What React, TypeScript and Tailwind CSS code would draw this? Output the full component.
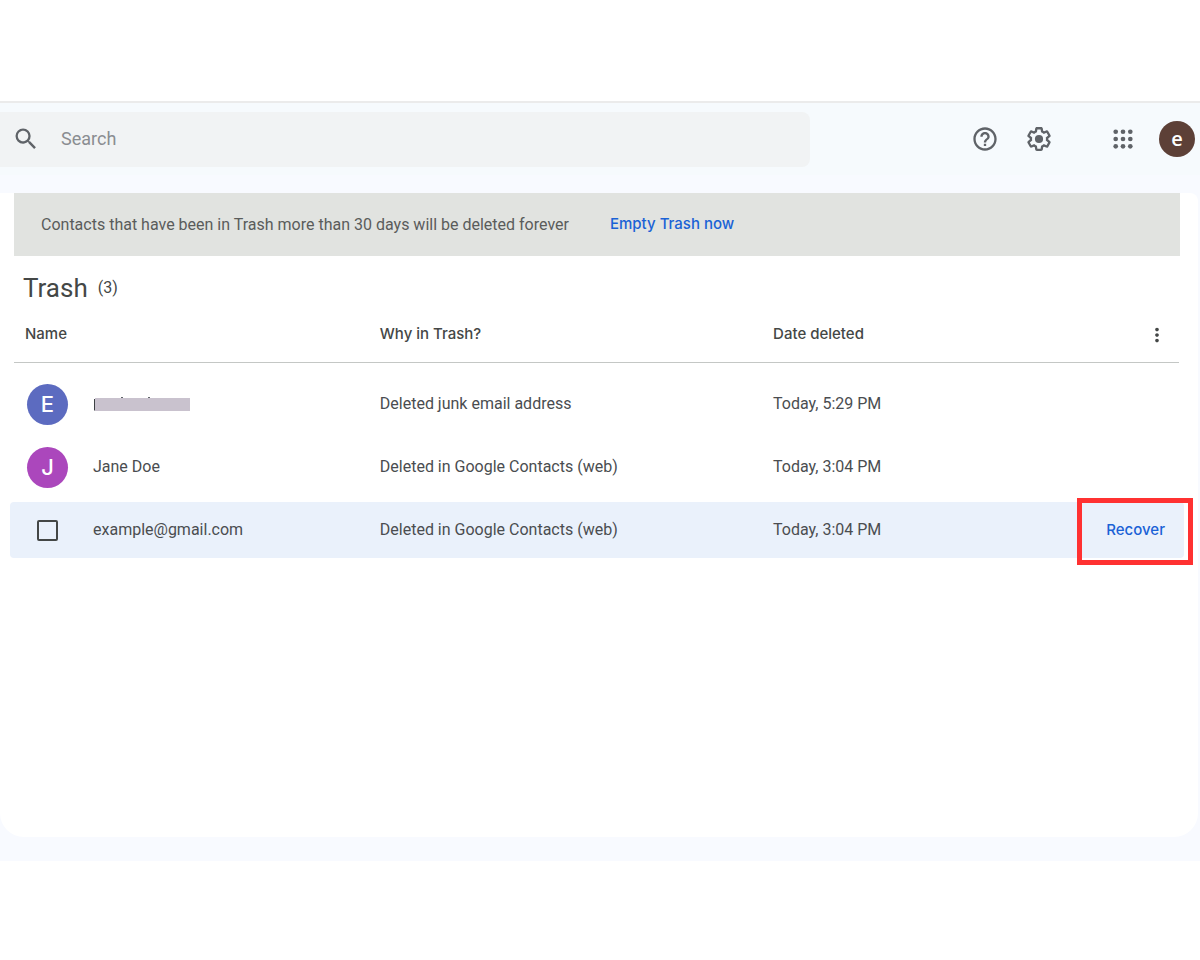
import React from 'react';
import { MdHelpOutline, MdMoreVert, MdSearch } from 'react-icons/md';

type TrashRow = {
    id: string;
    name: string | null;
    reason: string;
    date: string;
    initial?: string;
    color?: string;
    hovered?: boolean;
};

const rows: TrashRow[] = [
    { id: '1', name: null, reason: 'Deleted junk email address', date: 'Today, 5:29 PM', initial: 'E', color: 'bg-[#5c6bc0]' },
    { id: '2', name: 'Jane Doe', reason: 'Deleted in Google Contacts (web)', date: 'Today, 3:04 PM', initial: 'J', color: 'bg-[#ab47bc]' },
    { id: '3', name: 'example@gmail.com', reason: 'Deleted in Google Contacts (web)', date: 'Today, 3:04 PM', hovered: true },
];

function GearIcon() {
    return (
        <svg viewBox="0 0 24 24" className="size-7" fill="currentColor" aria-hidden="true">
            <path d="M13.85 22.25h-3.7c-.74 0-1.36-.54-1.45-1.27l-.27-1.89c-.27-.14-.53-.29-.79-.46l-1.8.72c-.7.26-1.47-.03-1.81-.65L2.2 15.53c-.35-.66-.2-1.44.36-1.88l1.53-1.19c-.01-.15-.02-.3-.02-.46 0-.15.01-.31.02-.46l-1.52-1.19c-.59-.45-.74-1.26-.37-1.88l1.85-3.19c.34-.62 1.11-.9 1.79-.63l1.81.73c.26-.17.52-.32.78-.46l.27-1.91c.09-.7.71-1.25 1.44-1.25h3.7c.74 0 1.36.54 1.45 1.27l.27 1.89c.27.14.53.29.79.46l1.8-.72c.71-.26 1.48.03 1.82.65l1.84 3.18c.36.66.2 1.44-.36 1.88l-1.52 1.19c.01.15.02.3.02.46s-.01.31-.02.46l1.52 1.19c.56.45.72 1.23.37 1.86l-1.86 3.22c-.34.62-1.11.9-1.8.63l-1.8-.72c-.26.17-.52.32-.78.46l-.27 1.91c-.1.68-.72 1.22-1.46 1.22zm-3.23-2h2.76l.37-2.55.53-.22c.44-.18.88-.44 1.34-.78l.45-.34 2.38.96 1.38-2.4-2.03-1.58.07-.56c.03-.26.06-.51.06-.78s-.03-.53-.06-.78l-.07-.56 2.03-1.58-1.39-2.4-2.39.96-.45-.35c-.42-.32-.87-.58-1.33-.77l-.52-.22-.37-2.55h-2.76l-.37 2.55-.53.21c-.44.19-.88.44-1.34.79l-.45.33-2.38-.95-1.39 2.39 2.03 1.58-.07.56a7 7 0 0 0-.06.79c0 .26.02.53.06.78l.07.56-2.03 1.58 1.38 2.4 2.39-.96.45.35c.43.33.86.58 1.33.77l.53.22.38 2.55z" />
            <circle cx="12" cy="12" r="3.5" />
        </svg>
    );
}

function AppsIcon() {
    const dots = [5.750, 12, 18.250];
    return (
        <svg viewBox="0 0 24 24" className="size-7" fill="currentColor" aria-hidden="true">
            {dots.map((cy) => dots.map((cx) => <circle key={`${cx}-${cy}`} cx={cx} cy={cy} r="2" />))}
        </svg>
    );
}

// Name hidden behind a bar, a few strokes still peek out
function RedactedName() {
    return (
        <svg width="97" height="16" viewBox="0 0 97 16" role="img" aria-label="Hidden name">
            <path d="M1 3h2v1.500h-1v3.500h1v1h-1v4h1v1.500h-2z" fill="#3c4043" />
            <path d="M28 1h2v1h-2zM55 1h2v1h-2z" fill="#5f6368" />
            <rect x="2" y="2" width="95" height="13" fill="#c9c2ce" />
        </svg>
    );
}

function Header() {
    return (
        <header className="flex h-[72px] items-center border-t-2 border-[#ebebeb] bg-[#f6fafd] pr-[5px] text-[#5f6368] box-content">
            <label className="flex h-[55px] w-[67.8%] items-center gap-[21px] rounded-r-lg bg-[#f1f3f4] pl-3">
                <MdSearch className="size-7 shrink-0" />
                <input type="text" placeholder="Search" aria-label="Search" className="min-w-0 flex-1 bg-transparent text-lg outline-none placeholder:text-[#8a8d91]" />
            </label>
            <div className="ml-auto flex items-center">
                <button type="button" aria-label="Help"><MdHelpOutline className="size-7" /></button>
                <button type="button" aria-label="Settings" className="ml-[26px]"><GearIcon /></button>
                <button type="button" aria-label="Google apps" className="ml-14"><AppsIcon /></button>
                <button type="button" aria-label="Account" className="ml-[22px] size-9 rounded-full bg-[#5d4037] font-['Open_Sans',sans-serif] text-xl font-semibold leading-none text-white">e</button>
            </div>
        </header>
    );
}

function Row({ row }: { row: TrashRow }) {
    const bg = row.hovered ? 'bg-[#eaf1fb]' : '';
    return (
        <tr className="text-[#4a4d50]">
            <td className={`h-14 rounded-l p-0 ${bg}`}>
                <div className="flex items-center">
                    <div className="flex w-[83px] shrink-0 pl-[17px]">
                        {row.initial ? (
                            <span className={`flex size-[41px] items-center justify-center rounded-full font-['Inter',sans-serif] text-[22px] font-medium text-white ${row.color}`}>{row.initial}</span>
                        ) : (
                            <span className="flex w-[41px] justify-center">
                                <input type="checkbox" aria-label={`Select ${row.name}`} className="size-[21px] appearance-none rounded-[2px] border-2 border-[#444746]" />
                            </span>
                        )}
                    </div>
                    {row.name ?? <RedactedName />}
                </div>
            </td>
            <td className={`p-0 ${bg}`}>{row.reason}</td>
            <td className={`p-0 ${bg}`}>{row.date}</td>
            <td className={`rounded-r p-0 text-right ${bg}`}>
                {row.hovered && (
                    <div className="relative flex h-14 items-center justify-end pr-[19px]">
                        <button type="button" className="font-['Inter',sans-serif] text-[15px] font-medium text-[#1a62d6]">Recover</button>
                        <span className="pointer-events-none absolute -right-[9px] -top-1 h-[67px] w-[116px] border-[5px] border-[#ff3131]" />
                    </div>
                )}
            </td>
        </tr>
    );
}

export default function App() {
    return (
        <div className="bg-white pt-[101px] font-['Roboto',sans-serif] text-base text-[#444746]">
            <div className="bg-[#f8faff] pb-6">
                <Header />
                <main className="mr-[2px] mt-[18px] min-h-[644px] rounded-b-[24px] rounded-tr-lg bg-white">
                    <div className="ml-[14px] mr-[18px] flex h-[63px] items-center gap-[41px] bg-[#e1e3e0] pl-[27px]">
                        <p className="text-[#5a5c5b]">Contacts that have been in Trash more than 30 days will be deleted forever</p>
                        <button type="button" className="font-['Inter',sans-serif] text-[15px] font-medium text-[#1a62d6]">Empty Trash now</button>
                    </div>
                    <div className="flex h-[44px] items-center gap-[10px] pl-[23px] pt-5">
                        <h1 className="text-[26px] leading-none">Trash</h1>
                        <span>(3)</span>
                    </div>
                    <div className="pl-[10px] pr-[14px]">
                        <table className="w-full table-fixed border-separate border-spacing-x-0 border-spacing-y-[7px] text-left">
                            <thead className="font-['Inter',sans-serif] text-[15px]">
                                <tr className="text-[#444746]">
                                    <th className="w-[31.5%] p-0 pb-[6px] pl-1 font-medium">
                                        <div className="flex h-14 items-center border-b border-[#c4c7c5] pl-[11px]">Name</div>
                                    </th>
                                    <th className="w-[33.5%] p-0 pb-[6px] font-medium">
                                        <div className="flex h-14 items-center border-b border-[#c4c7c5]">Why in Trash?</div>
                                    </th>
                                    <th className="p-0 pb-[6px] font-medium">
                                        <div className="flex h-14 items-center border-b border-[#c4c7c5]">Date deleted</div>
                                    </th>
                                    <th className="w-[120px] p-0 pb-[6px] pr-[5px]">
                                        <div className="flex h-14 items-center justify-end border-b border-[#c4c7c5] pr-[11px]">
                                            <button type="button" aria-label="More options"><MdMoreVert className="size-[22px]" /></button>
                                        </div>
                                    </th>
                                </tr>
                            </thead>
                            <tbody>
                                {rows.map((row) => <Row key={row.id} row={row} />)}
                            </tbody>
                        </table>
                    </div>
                </main>
            </div>
        </div>
    );
}
